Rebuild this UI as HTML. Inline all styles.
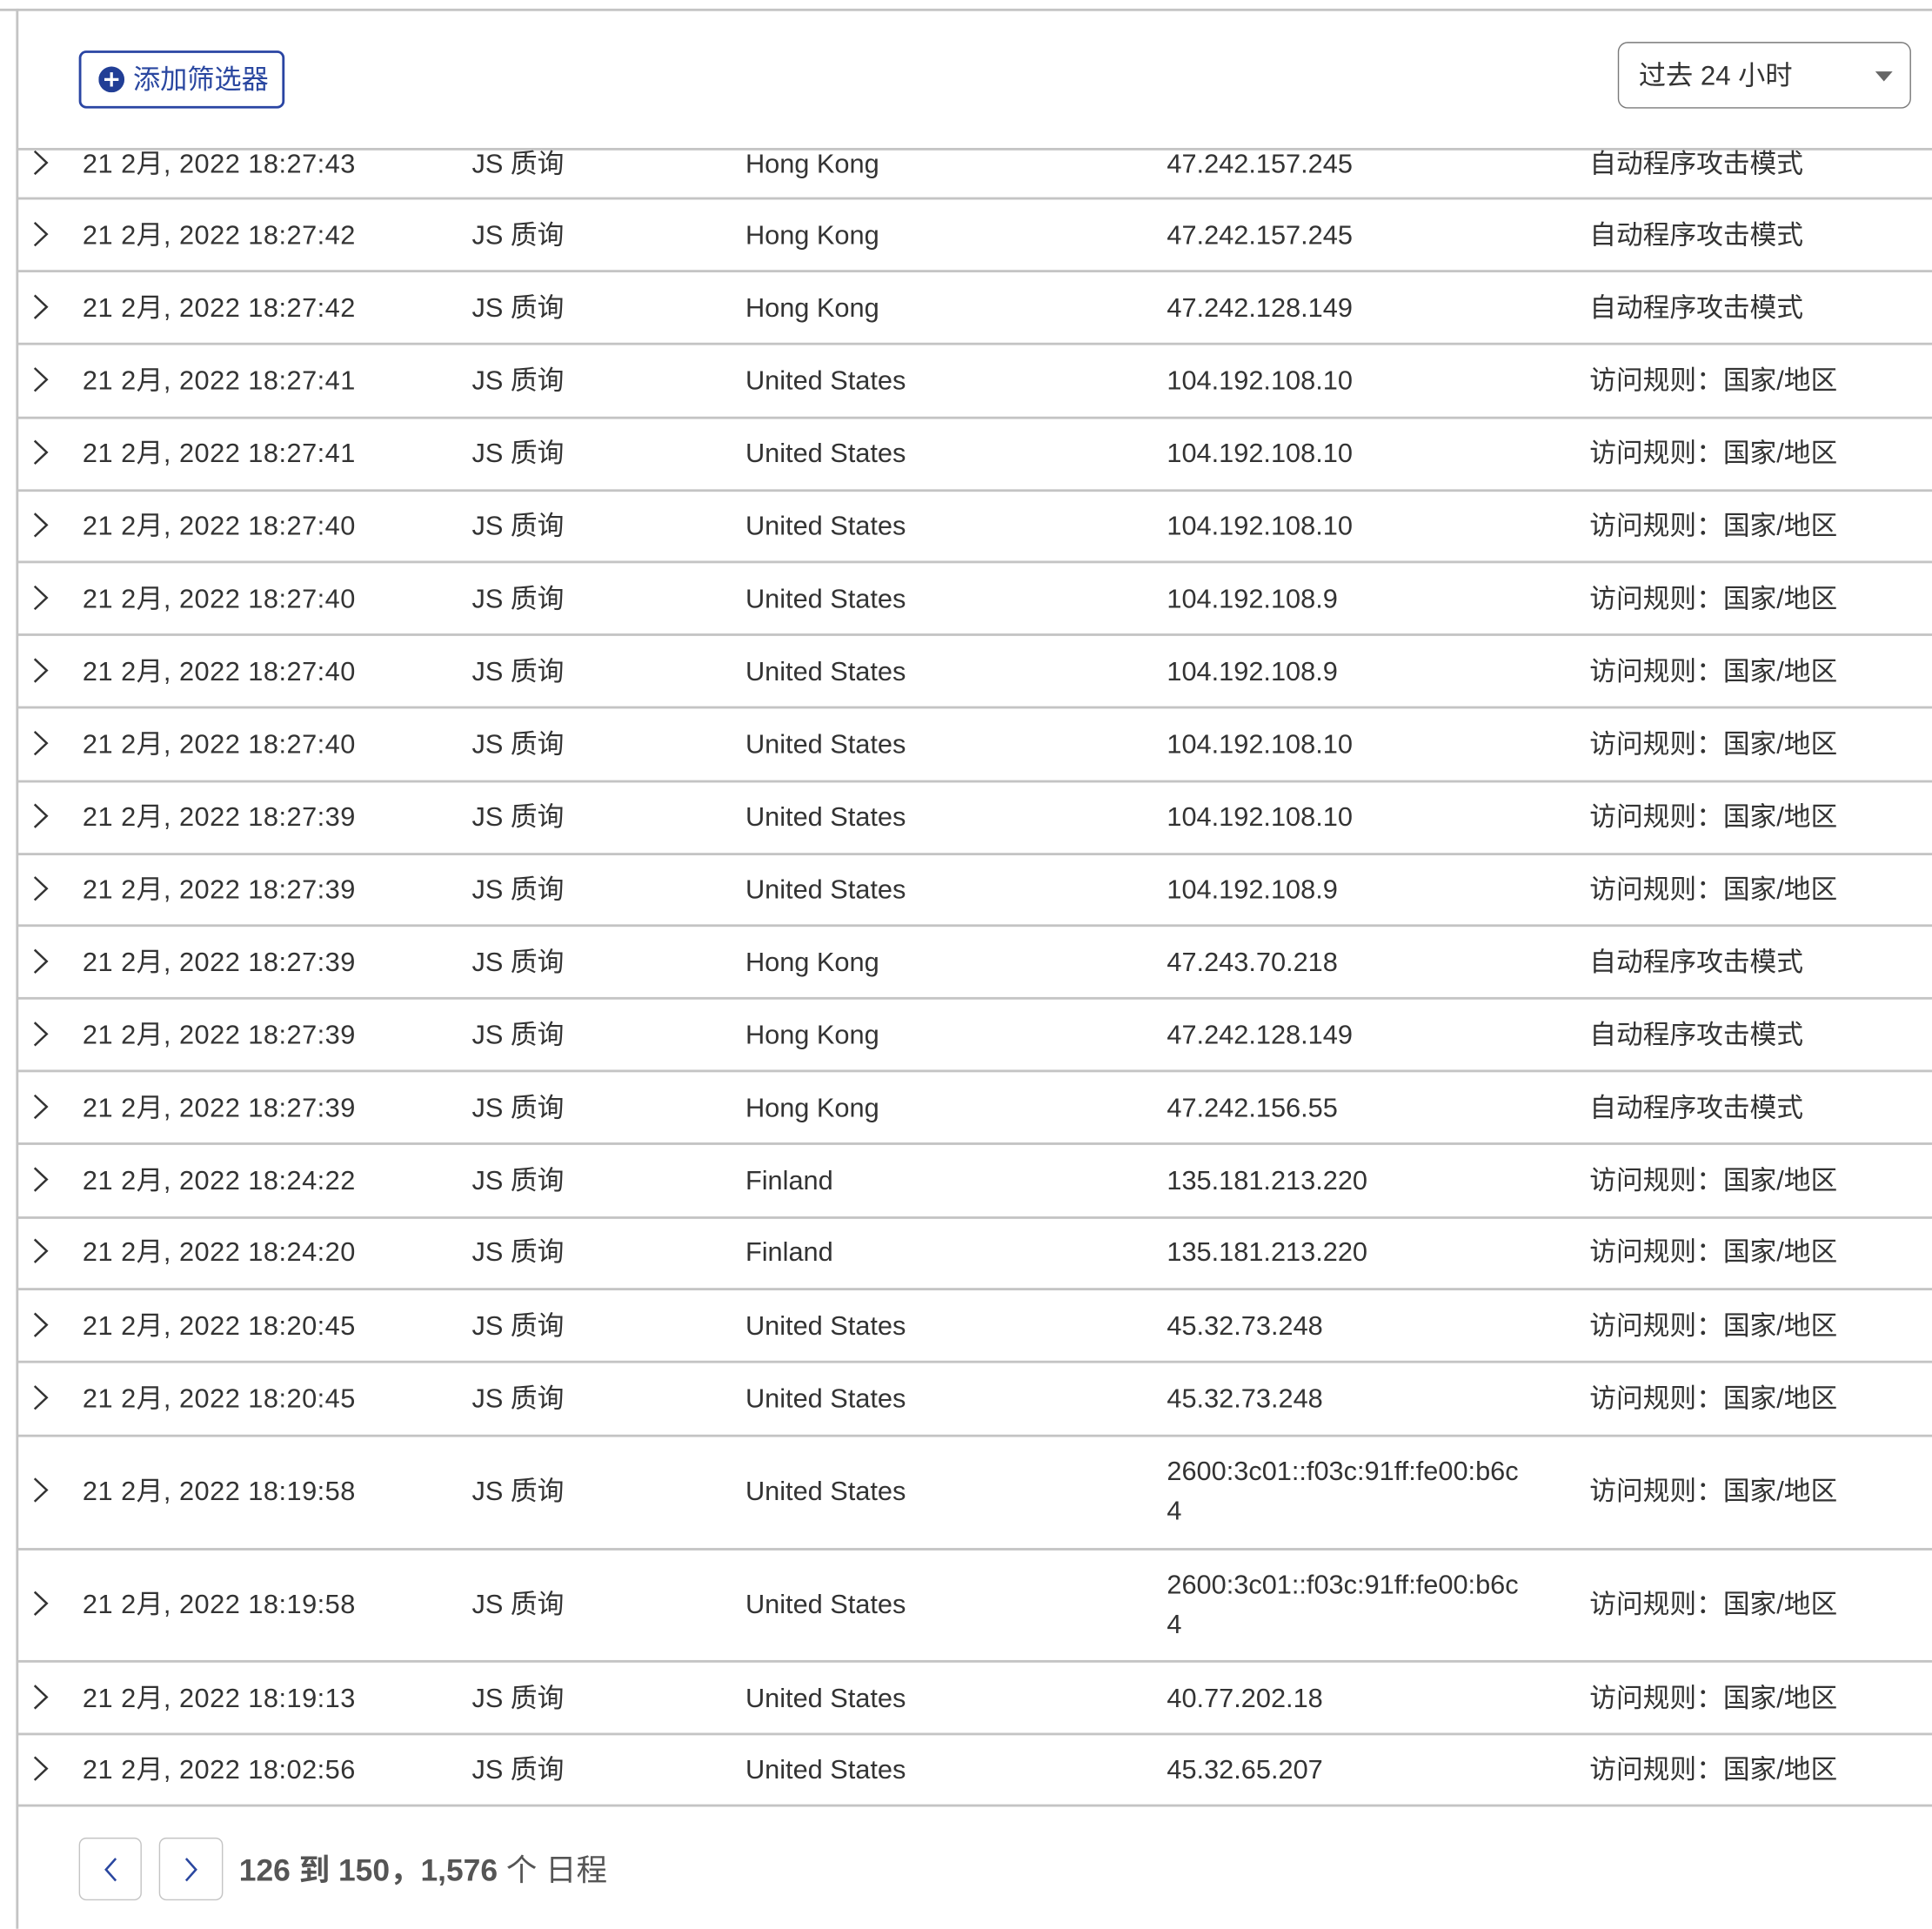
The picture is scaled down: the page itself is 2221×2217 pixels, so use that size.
<!DOCTYPE html>
<html><head><meta charset="utf-8"><style>
html,body{margin:0;padding:0;background:#fff;overflow:hidden}
body{width:2221px;height:2216px}
#w{position:absolute;left:0;top:0;width:1568px;height:1565px;transform:scale(1.41645);transform-origin:0 0;font-family:"Liberation Sans","Noto Sans CJK SC",sans-serif;color:#333;font-size:21.7px}
.hl{position:absolute;left:14px;right:0;height:1.5px;background:#c4c4c4}
.vl{position:absolute;left:13px;top:7px;width:1.5px;bottom:0;background:#c4c4c4}
.r{position:absolute;left:14px;right:0;display:flex;align-items:center}
.r span{position:absolute;white-space:nowrap;line-height:32px;top:1px}
.c0{left:12px;width:14px;height:22px}
.c1{left:53px;letter-spacing:0.35px}.c2{left:369px}.c3{left:591px}.c4{left:933px}.c5{left:1276px}
.btn{position:absolute;box-sizing:border-box}
</style></head><body><div id="w">
<div class="hl" style="top:7px;left:0"></div>
<div class="vl"></div>

<div class="btn" style="left:64px;top:41px;width:167px;height:47px;border:2px solid #2a45a3;border-radius:6px"></div>
<svg style="position:absolute;left:80px;top:54px" width="21" height="21" viewBox="0 0 20 20"><circle cx="10" cy="10" r="10" fill="#213e96"/><path d="M10 4.5v11M4.5 10h11" stroke="#fff" stroke-width="2.2"/></svg>
<div style="position:absolute;left:108px;top:50px;font-size:22px;color:#2a47a0;line-height:30px">添加筛选器</div>

<div class="btn" style="left:1313px;top:34px;width:238px;height:54px;border:1.5px solid #7a7a7a;border-radius:8px"></div>
<div style="position:absolute;left:1330px;top:47px;font-size:22px;line-height:30px;color:#333">过去 24 小时</div>
<svg style="position:absolute;left:1521px;top:57px" width="16" height="10"><path d="M1 1h14l-7 8z" fill="#666"/></svg>

<div class="hl" style="top:120px"></div><div class="hl" style="top:160px"></div><div class="hl" style="top:219px"></div><div class="hl" style="top:278px"></div><div class="hl" style="top:338px"></div><div class="hl" style="top:397px"></div><div class="hl" style="top:455px"></div><div class="hl" style="top:514px"></div><div class="hl" style="top:573px"></div><div class="hl" style="top:633px"></div><div class="hl" style="top:692px"></div><div class="hl" style="top:750px"></div><div class="hl" style="top:809px"></div><div class="hl" style="top:868px"></div><div class="hl" style="top:927px"></div><div class="hl" style="top:987px"></div><div class="hl" style="top:1045px"></div><div class="hl" style="top:1104px"></div><div class="hl" style="top:1164px"></div><div class="hl" style="top:1256px"></div><div class="hl" style="top:1347px"></div><div class="hl" style="top:1406px"></div><div class="hl" style="top:1464px"></div>

<svg width="0" height="0" style="position:absolute"><defs><symbol id="ch" viewBox="0 0 12 20"><path d="M1.5 1.5L10.5 10L1.5 18.5" fill="none" stroke="#333" stroke-width="1.6"/></symbol></defs></svg>

<div class="r" style="top:116px;height:32px"><svg class="c0" style="position:absolute;top:5px"><use href="#ch"/></svg><span class="c1">21 2月, 2022 18:27:43</span><span class="c2">JS 质询</span><span class="c3">Hong Kong</span><span class="c4">47.242.157.245</span><span class="c5">自动程序攻击模式</span></div>
<div class="r" style="top:174px;height:32px"><svg class="c0" style="position:absolute;top:5px"><use href="#ch"/></svg><span class="c1">21 2月, 2022 18:27:42</span><span class="c2">JS 质询</span><span class="c3">Hong Kong</span><span class="c4">47.242.157.245</span><span class="c5">自动程序攻击模式</span></div>
<div class="r" style="top:233px;height:32px"><svg class="c0" style="position:absolute;top:5px"><use href="#ch"/></svg><span class="c1">21 2月, 2022 18:27:42</span><span class="c2">JS 质询</span><span class="c3">Hong Kong</span><span class="c4">47.242.128.149</span><span class="c5">自动程序攻击模式</span></div>
<div class="r" style="top:292px;height:32px"><svg class="c0" style="position:absolute;top:5px"><use href="#ch"/></svg><span class="c1">21 2月, 2022 18:27:41</span><span class="c2">JS 质询</span><span class="c3">United States</span><span class="c4">104.192.108.10</span><span class="c5">访问规则：国家/地区</span></div>
<div class="r" style="top:351px;height:32px"><svg class="c0" style="position:absolute;top:5px"><use href="#ch"/></svg><span class="c1">21 2月, 2022 18:27:41</span><span class="c2">JS 质询</span><span class="c3">United States</span><span class="c4">104.192.108.10</span><span class="c5">访问规则：国家/地区</span></div>
<div class="r" style="top:410px;height:32px"><svg class="c0" style="position:absolute;top:5px"><use href="#ch"/></svg><span class="c1">21 2月, 2022 18:27:40</span><span class="c2">JS 质询</span><span class="c3">United States</span><span class="c4">104.192.108.10</span><span class="c5">访问规则：国家/地区</span></div>
<div class="r" style="top:469px;height:32px"><svg class="c0" style="position:absolute;top:5px"><use href="#ch"/></svg><span class="c1">21 2月, 2022 18:27:40</span><span class="c2">JS 质询</span><span class="c3">United States</span><span class="c4">104.192.108.9</span><span class="c5">访问规则：国家/地区</span></div>
<div class="r" style="top:528px;height:32px"><svg class="c0" style="position:absolute;top:5px"><use href="#ch"/></svg><span class="c1">21 2月, 2022 18:27:40</span><span class="c2">JS 质询</span><span class="c3">United States</span><span class="c4">104.192.108.9</span><span class="c5">访问规则：国家/地区</span></div>
<div class="r" style="top:587px;height:32px"><svg class="c0" style="position:absolute;top:5px"><use href="#ch"/></svg><span class="c1">21 2月, 2022 18:27:40</span><span class="c2">JS 质询</span><span class="c3">United States</span><span class="c4">104.192.108.10</span><span class="c5">访问规则：国家/地区</span></div>
<div class="r" style="top:646px;height:32px"><svg class="c0" style="position:absolute;top:5px"><use href="#ch"/></svg><span class="c1">21 2月, 2022 18:27:39</span><span class="c2">JS 质询</span><span class="c3">United States</span><span class="c4">104.192.108.10</span><span class="c5">访问规则：国家/地区</span></div>
<div class="r" style="top:705px;height:32px"><svg class="c0" style="position:absolute;top:5px"><use href="#ch"/></svg><span class="c1">21 2月, 2022 18:27:39</span><span class="c2">JS 质询</span><span class="c3">United States</span><span class="c4">104.192.108.9</span><span class="c5">访问规则：国家/地区</span></div>
<div class="r" style="top:764px;height:32px"><svg class="c0" style="position:absolute;top:5px"><use href="#ch"/></svg><span class="c1">21 2月, 2022 18:27:39</span><span class="c2">JS 质询</span><span class="c3">Hong Kong</span><span class="c4">47.243.70.218</span><span class="c5">自动程序攻击模式</span></div>
<div class="r" style="top:823px;height:32px"><svg class="c0" style="position:absolute;top:5px"><use href="#ch"/></svg><span class="c1">21 2月, 2022 18:27:39</span><span class="c2">JS 质询</span><span class="c3">Hong Kong</span><span class="c4">47.242.128.149</span><span class="c5">自动程序攻击模式</span></div>
<div class="r" style="top:882px;height:32px"><svg class="c0" style="position:absolute;top:5px"><use href="#ch"/></svg><span class="c1">21 2月, 2022 18:27:39</span><span class="c2">JS 质询</span><span class="c3">Hong Kong</span><span class="c4">47.242.156.55</span><span class="c5">自动程序攻击模式</span></div>
<div class="r" style="top:941px;height:32px"><svg class="c0" style="position:absolute;top:5px"><use href="#ch"/></svg><span class="c1">21 2月, 2022 18:24:22</span><span class="c2">JS 质询</span><span class="c3">Finland</span><span class="c4">135.181.213.220</span><span class="c5">访问规则：国家/地区</span></div>
<div class="r" style="top:999px;height:32px"><svg class="c0" style="position:absolute;top:5px"><use href="#ch"/></svg><span class="c1">21 2月, 2022 18:24:20</span><span class="c2">JS 质询</span><span class="c3">Finland</span><span class="c4">135.181.213.220</span><span class="c5">访问规则：国家/地区</span></div>
<div class="r" style="top:1059px;height:32px"><svg class="c0" style="position:absolute;top:5px"><use href="#ch"/></svg><span class="c1">21 2月, 2022 18:20:45</span><span class="c2">JS 质询</span><span class="c3">United States</span><span class="c4">45.32.73.248</span><span class="c5">访问规则：国家/地区</span></div>
<div class="r" style="top:1118px;height:32px"><svg class="c0" style="position:absolute;top:5px"><use href="#ch"/></svg><span class="c1">21 2月, 2022 18:20:45</span><span class="c2">JS 质询</span><span class="c3">United States</span><span class="c4">45.32.73.248</span><span class="c5">访问规则：国家/地区</span></div>
<div class="r" style="top:1193px;height:32px"><svg class="c0" style="position:absolute;top:5px"><use href="#ch"/></svg><span class="c1">21 2月, 2022 18:19:58</span><span class="c2">JS 质询</span><span class="c3">United States</span><span class="c4" style="top:-15px">2600:3c01::f03c:91ff:fe00:b6c<br>4</span><span class="c5">访问规则：国家/地区</span></div>
<div class="r" style="top:1285px;height:32px"><svg class="c0" style="position:absolute;top:5px"><use href="#ch"/></svg><span class="c1">21 2月, 2022 18:19:58</span><span class="c2">JS 质询</span><span class="c3">United States</span><span class="c4" style="top:-15px">2600:3c01::f03c:91ff:fe00:b6c<br>4</span><span class="c5">访问规则：国家/地区</span></div>
<div class="r" style="top:1361px;height:32px"><svg class="c0" style="position:absolute;top:5px"><use href="#ch"/></svg><span class="c1">21 2月, 2022 18:19:13</span><span class="c2">JS 质询</span><span class="c3">United States</span><span class="c4">40.77.202.18</span><span class="c5">访问规则：国家/地区</span></div>
<div class="r" style="top:1419px;height:32px"><svg class="c0" style="position:absolute;top:5px"><use href="#ch"/></svg><span class="c1">21 2月, 2022 18:02:56</span><span class="c2">JS 质询</span><span class="c3">United States</span><span class="c4">45.32.65.207</span><span class="c5">访问规则：国家/地区</span></div>

<div class="btn" style="left:64px;top:1491px;width:51px;height:51px;border:1.5px solid #c4c4c4;border-radius:6px"></div>
<svg style="position:absolute;left:83px;top:1506px" width="14" height="22"><path d="M11 2L3 11L11 20" fill="none" stroke="#2a47a0" stroke-width="1.8"/></svg>
<div class="btn" style="left:129px;top:1491px;width:52px;height:51px;border:1.5px solid #c4c4c4;border-radius:6px"></div>
<svg style="position:absolute;left:148px;top:1506px" width="14" height="22"><path d="M3 2L11 11L3 20" fill="none" stroke="#2a47a0" stroke-width="1.8"/></svg>
<div style="position:absolute;left:194px;top:1501px;font-size:25px;line-height:34px;color:#555;white-space:nowrap"><b>126 到 150，1,576</b> 个 日程</div>
</div></body></html>
